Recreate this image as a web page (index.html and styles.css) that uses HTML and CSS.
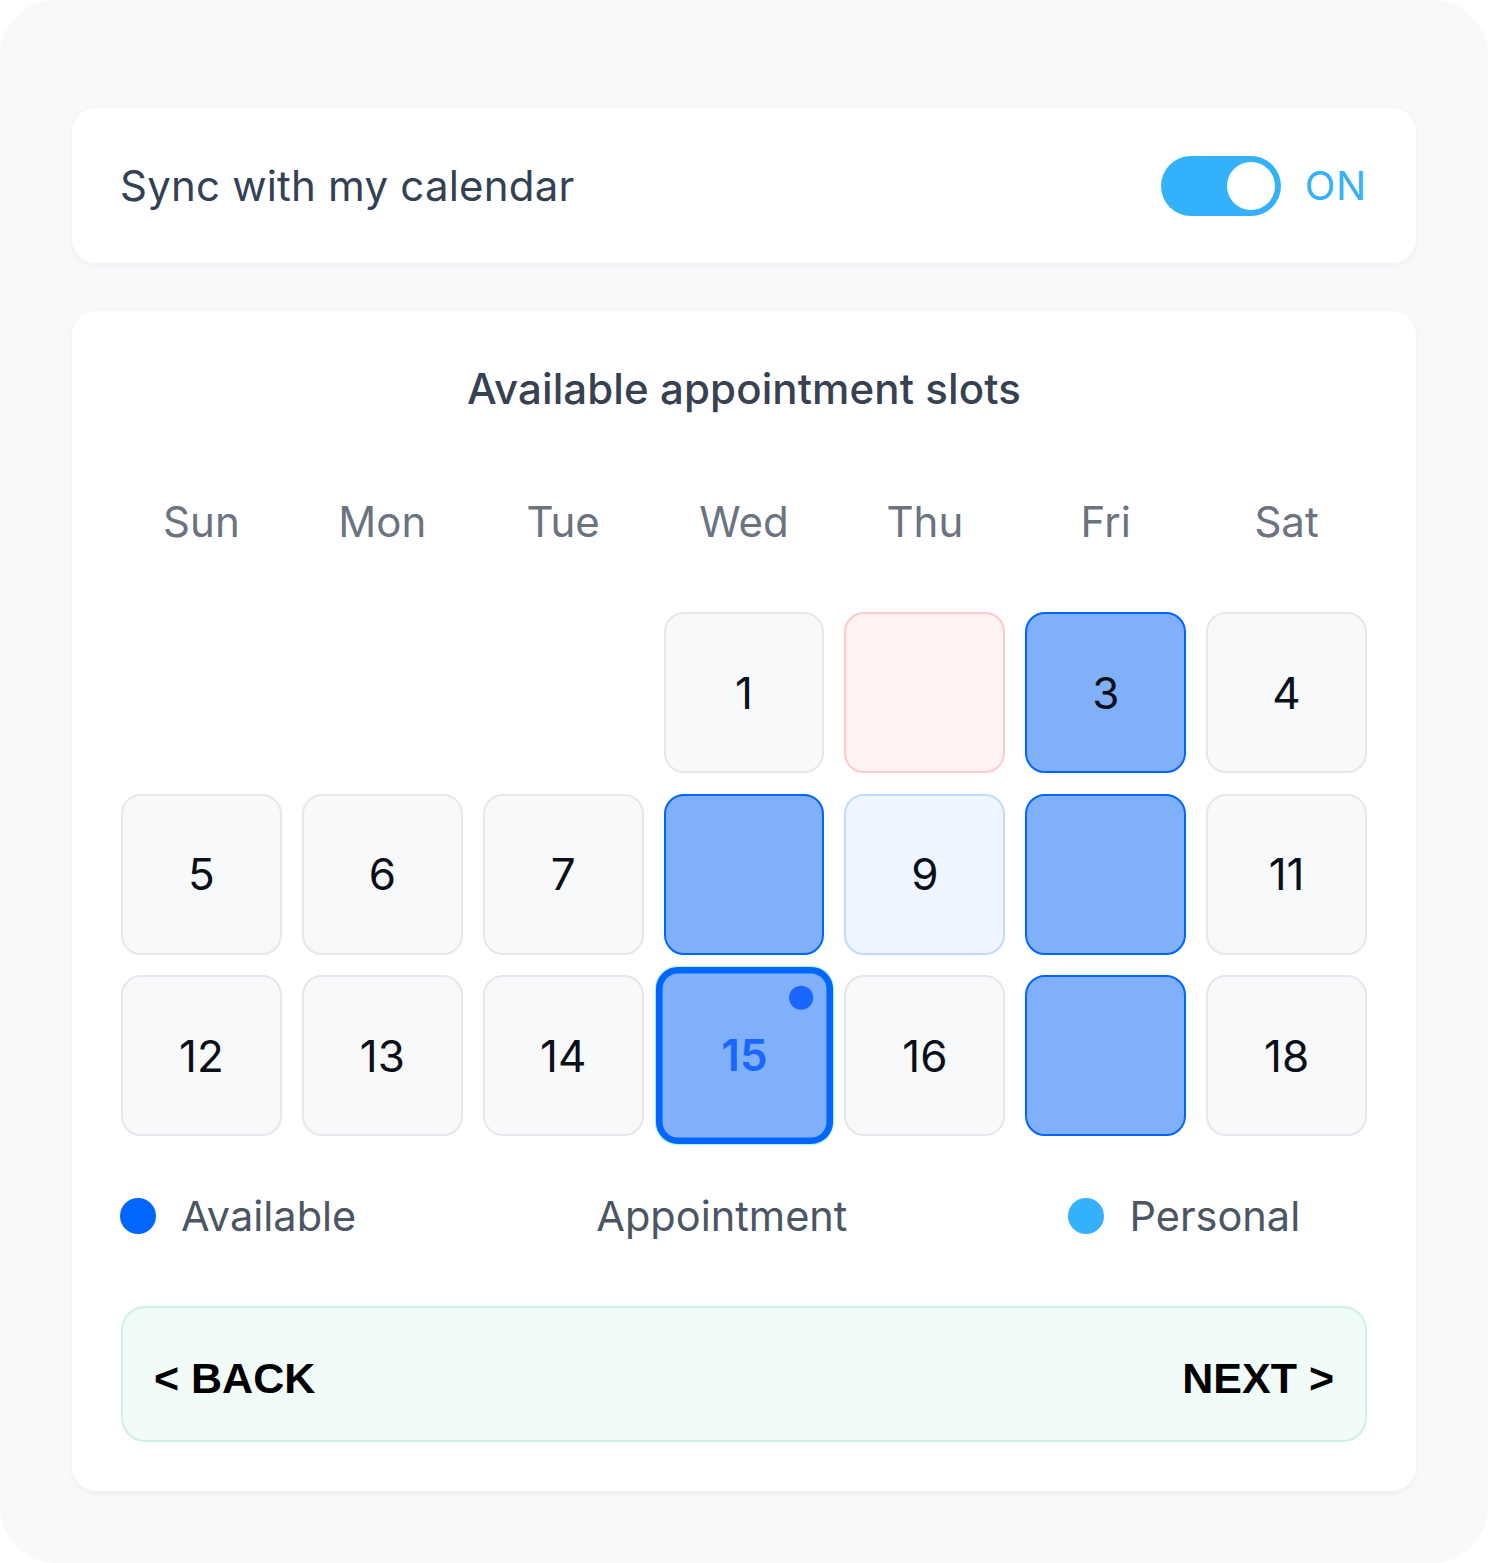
FILE: index.html
```html
<!DOCTYPE html>
<html lang="en">
<head>
<meta charset="utf-8">
<title>Calendar sync</title>
<link rel="stylesheet" href="styles.css">
</head>
<body>
<div class="frame">
  <section class="card sync">
    <span class="sync-label">Sync with my calendar</span>
    <div class="toggle-wrap">
      <span class="toggle"><span class="knob"></span></span>
      <span class="on">ON</span>
    </div>
  </section>

  <section class="card cal">
    <h2 class="title">Available appointment slots</h2>
    <div class="days">
      <span>Sun</span><span>Mon</span><span>Tue</span><span>Wed</span><span>Thu</span><span>Fri</span><span>Sat</span>
    </div>
    <div class="grid">
      <span class="blank"></span>
      <span class="blank"></span>
      <span class="blank"></span>
      <span class="cell">1</span>
      <span class="cell busy"></span>
      <span class="cell avail">3</span>
      <span class="cell">4</span>

      <span class="cell">5</span>
      <span class="cell">6</span>
      <span class="cell">7</span>
      <span class="cell avail"></span>
      <span class="cell light">9</span>
      <span class="cell avail"></span>
      <span class="cell">11</span>

      <span class="cell">12</span>
      <span class="cell">13</span>
      <span class="cell">14</span>
      <span class="cell avail selected">15<span class="dot"></span></span>
      <span class="cell">16</span>
      <span class="cell avail"></span>
      <span class="cell">18</span>
    </div>
    <div class="legend">
      <span class="item"><span class="ldot blue"></span>Available</span>
      <span class="item appt"><span class="ldot none"></span>Appointment</span>
      <span class="item pers"><span class="ldot sky"></span>Personal</span>
    </div>
    <div class="nav">
      <span class="nav-btn">&lt; BACK</span>
      <span class="nav-btn">NEXT &gt;</span>
    </div>
  </section>
</div>
</body>
</html>
```

FILE: styles.css
```css
* { box-sizing: border-box; }
html, body { margin: 0; padding: 0; background: #ffffff; }
body {
  font-family: Inter, "Noto Sans", "Liberation Sans", sans-serif;
  width: 1488px;
  height: 1563px;
}
.frame {
  width: 1488px;
  height: 1563px;
  background: #f8f9fb;
  border-radius: 56px;
  padding: 108px 72px 72px;
  display: flex;
  flex-direction: column;
  gap: 48px;
}
.card {
  background: #ffffff;
  border-radius: 24px;
  box-shadow: 0 2px 6px rgba(15, 23, 42, 0.05);
}
.sync {
  height: 156px;
  padding: 0 49px 0 48px;
  display: flex;
  align-items: center;
  justify-content: space-between;
}
.sync-label {
  font-size: 42px;
  color: #334155;
  letter-spacing: 0.2px;
}
.toggle-wrap {
  display: flex;
  align-items: center;
  gap: 24px;
}
.toggle {
  width: 120px;
  height: 60px;
  border-radius: 30px;
  background: #33b1fa;
  display: flex;
  align-items: center;
  justify-content: flex-end;
  padding: 0 6px;
}
.knob {
  width: 48px;
  height: 48px;
  border-radius: 50%;
  background: #ffffff;
}
.on {
  font-size: 40px;
  color: #33b1fa;
  letter-spacing: 0.8px;
}
.cal {
  padding: 48px 49px 49px;
  display: flex;
  flex-direction: column;
}
.title {
  margin: 0;
  font-size: 42px;
  line-height: 60px;
  font-weight: 500;
  color: #374151;
  text-align: center;
  letter-spacing: 0.1px;
}
.days {
  margin-top: 73px;
  display: grid;
  grid-template-columns: repeat(7, 1fr);
  column-gap: 20px;
  font-size: 42px;
  line-height: 60px;
  color: #6b7280;
  text-align: center;
}
.grid {
  margin-top: 60px;
  display: grid;
  grid-template-columns: repeat(7, 1fr);
  gap: 20.5px 20px;
}
.cell {
  position: relative;
  aspect-ratio: 1 / 1;
  border: 2px solid #e5e7eb;
  background: #f8f9fb;
  border-radius: 20px;
  display: flex;
  align-items: center;
  justify-content: center;
  font-size: 44px;
  color: #0b0f19;
}
.busy { background: #fef2f2; border-color: #fecaca; }
.light { background: #eff6ff; border-color: #bfdbfe; }
.avail { background: #80b0fa; border-color: #0066ff; }
.selected {
  transform: scale(1.1);
  border-width: 6px;
  font-size: 40px;
  color: #1a66ff;
  font-weight: 600;
  box-shadow: 0 0 0 1px rgba(134, 239, 172, 0.6);
  z-index: 1;
}
.dot {
  position: absolute;
  top: 11px;
  right: 12px;
  width: 22px;
  height: 22px;
  border-radius: 50%;
  background: #1a66ff;
}
.legend {
  margin-top: 50px;
  display: flex;
  align-items: center;
  font-size: 41.5px;
  line-height: 60px;
  color: #4b5563;
}
.item {
  display: flex;
  align-items: center;
  gap: 25px;
}
.item.appt { margin-left: 180px; }
.item.pers { margin-left: 222px; }
.ldot {
  width: 36px;
  height: 36px;
  border-radius: 50%;
  margin-left: -1px;
}
.ldot.blue { background: #0066ff; }
.ldot.sky { background: #33b1fa; }
.ldot.none { background: transparent; }
.nav {
  margin-top: 60px;
  height: 136px;
  border: 2px solid #ccf2e2;
  background: #f1fbf7;
  border-radius: 24px;
  padding: 9px 31px 0;
  display: flex;
  align-items: center;
  justify-content: space-between;
}
.nav-btn {
  font-family: "Liberation Sans", Arial, sans-serif;
  font-size: 43px;
  font-weight: 700;
  color: #000000;
  letter-spacing: 0;
}
```
